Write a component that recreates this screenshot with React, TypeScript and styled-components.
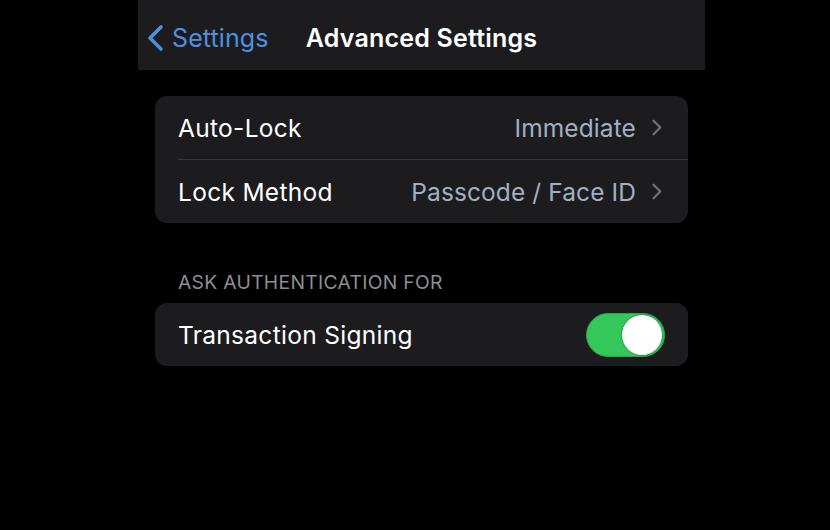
import React, { useState } from 'react';
import styled, { createGlobalStyle } from 'styled-components';

const GlobalStyle = createGlobalStyle`
	html, body {
		margin: 0;
		padding: 0;
		background: #000;
		height: 100%;
	}
	body {
		font-family: Inter, 'Noto Sans', 'Liberation Sans', sans-serif;
		-webkit-font-smoothing: antialiased;
	}
`;

const BackChevron = () => (
	<svg width="20" height="28" viewBox="0 0 20 28" fill="none">
		<path d="M15 3 L4 14 L15 25" stroke="#4f8fe0" strokeWidth="3.6" strokeLinecap="round" strokeLinejoin="round" />
	</svg>
);

const RowChevron = () => (
	<svg width="12" height="17" viewBox="0 0 12 17" fill="none">
		<path d="M2.5 1.8 L9.3 8.5 L2.5 15.2" stroke="#707075" strokeWidth="2.3" strokeLinecap="round" strokeLinejoin="round" />
	</svg>
);

interface ToggleProps {
	on: boolean;
	onChange: () => void;
}

const Toggle: React.FC<ToggleProps> = ({ on, onChange }) => (
	<Track $on={on} onClick={onChange} role="switch" aria-checked={on}>
		<Knob $on={on} />
	</Track>
);

const App: React.FC = () => {
	const [signing, setSigning] = useState(true);

	return (
		<>
			<GlobalStyle />
			<Screen>
				<Phone>
					<NavBar>
						<BackButton>
							<BackChevron />
							<span>Settings</span>
						</BackButton>
						<NavTitle>Advanced Settings</NavTitle>
						<span />
					</NavBar>
					<Content>
						<Group>
							<Row>
								<Label>Auto-Lock</Label>
								<Value>
									Immediate
									<RowChevron />
								</Value>
							</Row>
							<Divider />
							<Row>
								<Label>Lock Method</Label>
								<Value>
									Passcode / Face ID
									<RowChevron />
								</Value>
							</Row>
						</Group>
						<SectionHeader>Ask Authentication For</SectionHeader>
						<Group>
							<Row>
								<Label>Transaction Signing</Label>
								<Toggle on={signing} onChange={() => setSigning(!signing)} />
							</Row>
						</Group>
					</Content>
				</Phone>
			</Screen>
		</>
	);
};

const Screen = styled.div`
	width: 830px;
	height: 530px;
	background: #000;
	display: flex;
	justify-content: flex-start;
	padding-left: 138px;
	box-sizing: border-box;
	overflow: hidden;
`;

const Phone = styled.div`
	width: 567px;
	display: flex;
	flex-direction: column;
`;

const NavBar = styled.div`
	height: 70px;
	background: #1c1c1e;
	display: grid;
	grid-template-columns: 1fr auto 1fr;
	align-items: center;
	padding: 0 8px;
	box-sizing: border-box;
`;

const BackButton = styled.div`
	display: flex;
	align-items: center;
	gap: 6px;
	color: #4f8fe0;
	font-size: 25px;
	letter-spacing: 0.1px;
	padding-top: 5px;
`;

const NavTitle = styled.div`
	color: #fff;
	font-size: 25px;
	font-weight: 600;
	letter-spacing: 0.2px;
	padding-top: 5px;
`;

const Content = styled.div`
	padding: 26px 17px 0;
	display: flex;
	flex-direction: column;
`;

const Group = styled.div`
	background: #1c1c1e;
	border-radius: 12px;
	overflow: hidden;
`;

const Row = styled.div`
	height: 63px;
	box-sizing: border-box;
	display: flex;
	align-items: center;
	justify-content: space-between;
	padding: 0 23px;
`;

const Divider = styled.div`
	height: 1px;
	background: #38383a;
	margin-left: 23px;
`;

const Label = styled.span`
	color: #fff;
	font-size: 24.5px;
	letter-spacing: 0.3px;
`;

const Value = styled.span`
	display: flex;
	align-items: center;
	gap: 15px;
	color: #a2afc2;
	font-size: 24.5px;
	letter-spacing: 0.1px;
	margin-right: 2px;
`;

const SectionHeader = styled.div`
	color: #8e8e93;
	font-size: 19.3px;
	text-transform: uppercase;
	letter-spacing: 0.3px;
	padding: 47px 23px 9px;
`;

const Track = styled.div<{ $on: boolean }>`
	width: 79px;
	height: 44px;
	border-radius: 22px;
	box-sizing: border-box;
	background: ${p => (p.$on ? '#34c759' : '#39393d')};
	border: 1px solid ${p => (p.$on ? '#2aa44a' : '#39393d')};
	display: flex;
	align-items: center;
	justify-content: ${p => (p.$on ? 'flex-end' : 'flex-start')};
	padding: 0 2px;
	cursor: pointer;
`;

const Knob = styled.div<{ $on: boolean }>`
	width: 40px;
	height: 40px;
	border-radius: 50%;
	background: #fff;
	box-shadow: 0 0 0 1px rgba(30, 120, 50, 0.5);
`;

export default App;
